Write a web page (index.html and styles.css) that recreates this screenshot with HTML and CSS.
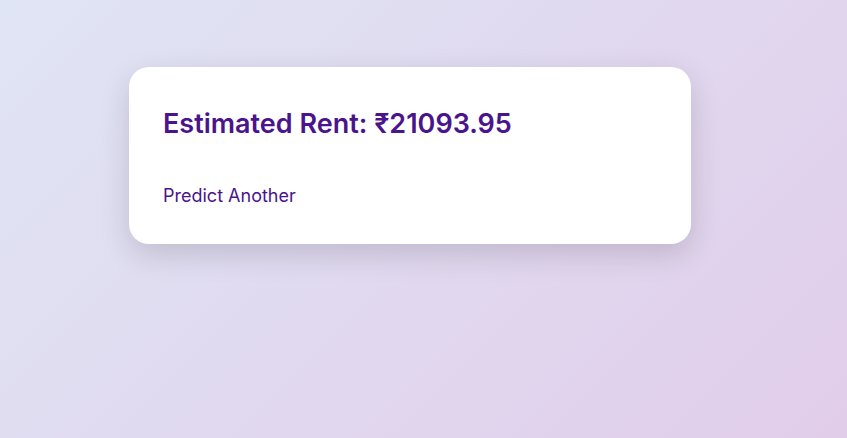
FILE: index.html
```html
<!DOCTYPE html>
<html lang="en">
<head>
<meta charset="utf-8">
<title>Estimated Rent</title>
<link rel="stylesheet" href="styles.css">
</head>
<body>
<main class="page">
  <section class="card">
    <h2 class="result">Estimated Rent: ₹21093.95</h2>
    <a class="again" href="#">Predict Another</a>
  </section>
</main>
</body>
</html>
```

FILE: styles.css
```css
html, body {
  margin: 0;
  height: 100%;
}
body {
  font-family: Inter, "Noto Sans", sans-serif;
  background: linear-gradient(135deg, #e0e5f5 0%, #e1cdea 100%);
  background-attachment: fixed;
}
.page {
  padding: 67px 0 0 129px;
}
.card {
  width: 562px;
  box-sizing: border-box;
  background: #ffffff;
  border-radius: 20px;
  padding: 40px 34px 38px;
  box-shadow: 0 10px 30px rgba(0, 0, 0, 0.15);
  display: flex;
  flex-direction: column;
  align-items: flex-start;
  gap: 44.5px;
}
.result {
  margin: 0;
  font-size: 27px;
  font-weight: 600;
  color: #4a148c;
  line-height: normal;
}
.again {
  font-size: 18px;
  color: #4a148c;
  text-decoration: none;
  line-height: normal;
}
```
